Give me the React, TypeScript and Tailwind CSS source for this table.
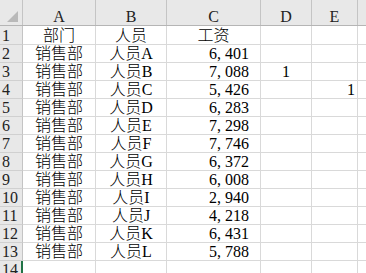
import React from "react";

const FONT = "font-['Liberation_Serif','Noto_Sans_CJK_SC',serif] font-light";

const widths = ["w-[73px]", "w-[71px]", "w-[94px]", "w-[51px]", "w-[46px]"];

const salaries = ["6,401", "7,088", "5,426", "6,283", "7,298", "7,746", "6,372", "6,008", "2,940", "4,218", "6,431", "5,788"];
const letters = ["A", "B", "C", "D", "E", "F", "G", "H", "I", "J", "K", "L"];

function Num({ v }: { v: string }) {
  const [a, b] = v.split(",");
  return (
    <span>
      {a}
      <span className="inline-block w-[8px]">,</span>
      {b}
    </span>
  );
}

type Cell = { content?: React.ReactNode; align?: "left" | "center" | "right"; pr?: boolean };

function Row({ n, h, cells, active }: { n: number; h: string; cells: Cell[]; active?: boolean }) {
  return (
    <div className={`flex ${h} shrink-0`}>
      <div
        className={`w-[23px] shrink-0 bg-[#e8e8e8] border-b border-[#d0d0d0] ${active ? "border-r-2 border-r-[#217346]" : "border-r border-r-[#c4c4c4]"} flex items-end pl-[2px] text-[16px] leading-[16px] text-[#222] ${FONT}`}
      >
        {n}
      </div>
      {widths.map((w, i) => {
        const c = cells[i] || {};
        const just =
          c.align === "right" ? "justify-end" : c.align === "left" ? "justify-start" : "justify-center";
        return (
          <div
            key={i}
            className={`${w} shrink-0 border-r border-b border-[#d9d9d9] flex items-end ${just} ${c.pr ? "pr-[11px]" : c.align === "right" ? "pr-[2px]" : ""} text-[16px] leading-[16px] text-black whitespace-nowrap ${FONT}`}
          >
            {c.content}
          </div>
        );
      })}
      <div className="flex-1 border-b border-[#d9d9d9]" />
    </div>
  );
}

export default function App() {
  const headers = ["A", "B", "C", "D", "E"];
  return (
    <div className="w-[366px] h-[273px] overflow-hidden bg-white flex flex-col">
      {/* column header */}
      <div className="flex h-[26px] shrink-0 bg-[#e8e8e8] border-b border-[#b5b5b5]">
        <div className="w-[23px] shrink-0 border-r border-[#c4c4c4] relative">
          <svg className="absolute left-0 top-0" width="22" height="25" viewBox="0 0 22 25">
            <polygon points="18,11 18,22 7,22" fill="#b9b9b9" />
          </svg>
        </div>
        {headers.map((h, i) => (
          <div
            key={h}
            className={`${widths[i]} shrink-0 border-r border-[#c4c4c4] flex items-end justify-center text-[16px] leading-[16px] text-[#222] ${FONT}`}
          >
            {h}
          </div>
        ))}
        <div className="flex-1" />
      </div>
      <Row
        n={1}
        h="h-[19px]"
        cells={[{ content: "部门" }, { content: "人员" }, { content: "工资" }]}
      />
      {salaries.map((s, i) => {
        const cells: Cell[] = [
          { content: "销售部" },
          { content: `人员${letters[i]}` },
          { content: <Num v={s} />, align: "right", pr: true },
        ];
        if (i === 1) cells[3] = { content: "1" };
        if (i === 2) {
          cells[3] = {};
          cells[4] = { content: "1", align: "right" };
        }
        return <Row key={i} n={i + 2} h="h-[18px]" cells={cells} />;
      })}
      <Row n={14} h="h-[18px]" cells={[]} active />
    </div>
  );
}
